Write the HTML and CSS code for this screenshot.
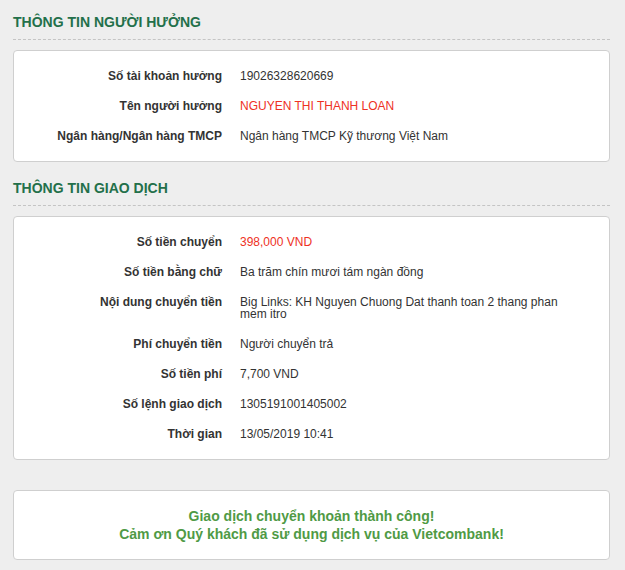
FILE: index.html
```html
<!DOCTYPE html>
<html lang="vi">
<head>
<meta charset="utf-8">
<title>Vietcombank</title>
<link rel="stylesheet" href="styles.css">
</head>
<body>
<div class="page">
  <h2 class="section-title">THÔNG TIN NGƯỜI HƯỞNG</h2>
  <div class="card">
    <div class="row"><div class="label">Số tài khoản hưởng</div><div class="value">19026328620669</div></div>
    <div class="row"><div class="label">Tên người hưởng</div><div class="value red">NGUYEN THI THANH LOAN</div></div>
    <div class="row"><div class="label">Ngân hàng/Ngân hàng TMCP</div><div class="value">Ngân hàng TMCP Kỹ thương Việt Nam</div></div>
  </div>

  <h2 class="section-title second">THÔNG TIN GIAO DỊCH</h2>
  <div class="card">
    <div class="row"><div class="label">Số tiền chuyển</div><div class="value red">398,000 VND</div></div>
    <div class="row"><div class="label">Số tiền bằng chữ</div><div class="value">Ba trăm chín mươi tám ngàn đồng</div></div>
    <div class="row"><div class="label">Nội dung chuyển tiền</div><div class="value">Big Links: KH Nguyen Chuong Dat thanh toan 2 thang phan mem itro</div></div>
    <div class="row"><div class="label">Phí chuyển tiền</div><div class="value">Người chuyển trả</div></div>
    <div class="row"><div class="label">Số tiền phí</div><div class="value">7,700 VND</div></div>
    <div class="row"><div class="label">Số lệnh giao dịch</div><div class="value">1305191001405002</div></div>
    <div class="row"><div class="label">Thời gian</div><div class="value">13/05/2019 10:41</div></div>
  </div>

  <div class="card success">
    <p>Giao dịch chuyển khoản thành công!</p>
    <p>Cảm ơn Quý khách đã sử dụng dịch vụ của Vietcombank!</p>
  </div>
</div>
</body>
</html>
```

FILE: styles.css
```css
html, body {
  margin: 0;
  padding: 0;
  background: #eeeeee;
}
body {
  font-family: "Liberation Sans", Arial, Helvetica, sans-serif;
  color: #333333;
}
.page {
  width: 597px;
  margin-left: 13px;
  padding-top: 13px;
}
.section-title {
  margin: 0;
  font-size: 14px;
  line-height: 18px;
  font-weight: bold;
  color: #23704a;
  padding-bottom: 8px;
  border-bottom: 1px dashed #c4c4c4;
}
.section-title.second {
  margin-top: 17px;
}
.card {
  margin-top: 10px;
  background: #ffffff;
  border: 1px solid #cfcfcf;
  border-radius: 4px;
  padding: 10px 0 10px;
}
.row {
  display: grid;
  grid-template-columns: 208px 1fr;
  column-gap: 18px;
  padding: 9px 35px 9px 0;
  font-size: 12px;
  line-height: 12px;
}
.label {
  text-align: right;
  font-weight: bold;
  color: #333333;
}
.value {
  color: #333333;
}
.value.red {
  color: #ee3124;
}
.card.success {
  margin-top: 30px;
  padding: 16px 0 16px;
  text-align: center;
}
.card.success p {
  margin: 0;
  font-size: 14px;
  line-height: 18px;
  font-weight: bold;
  color: #4f9a45;
}
```
